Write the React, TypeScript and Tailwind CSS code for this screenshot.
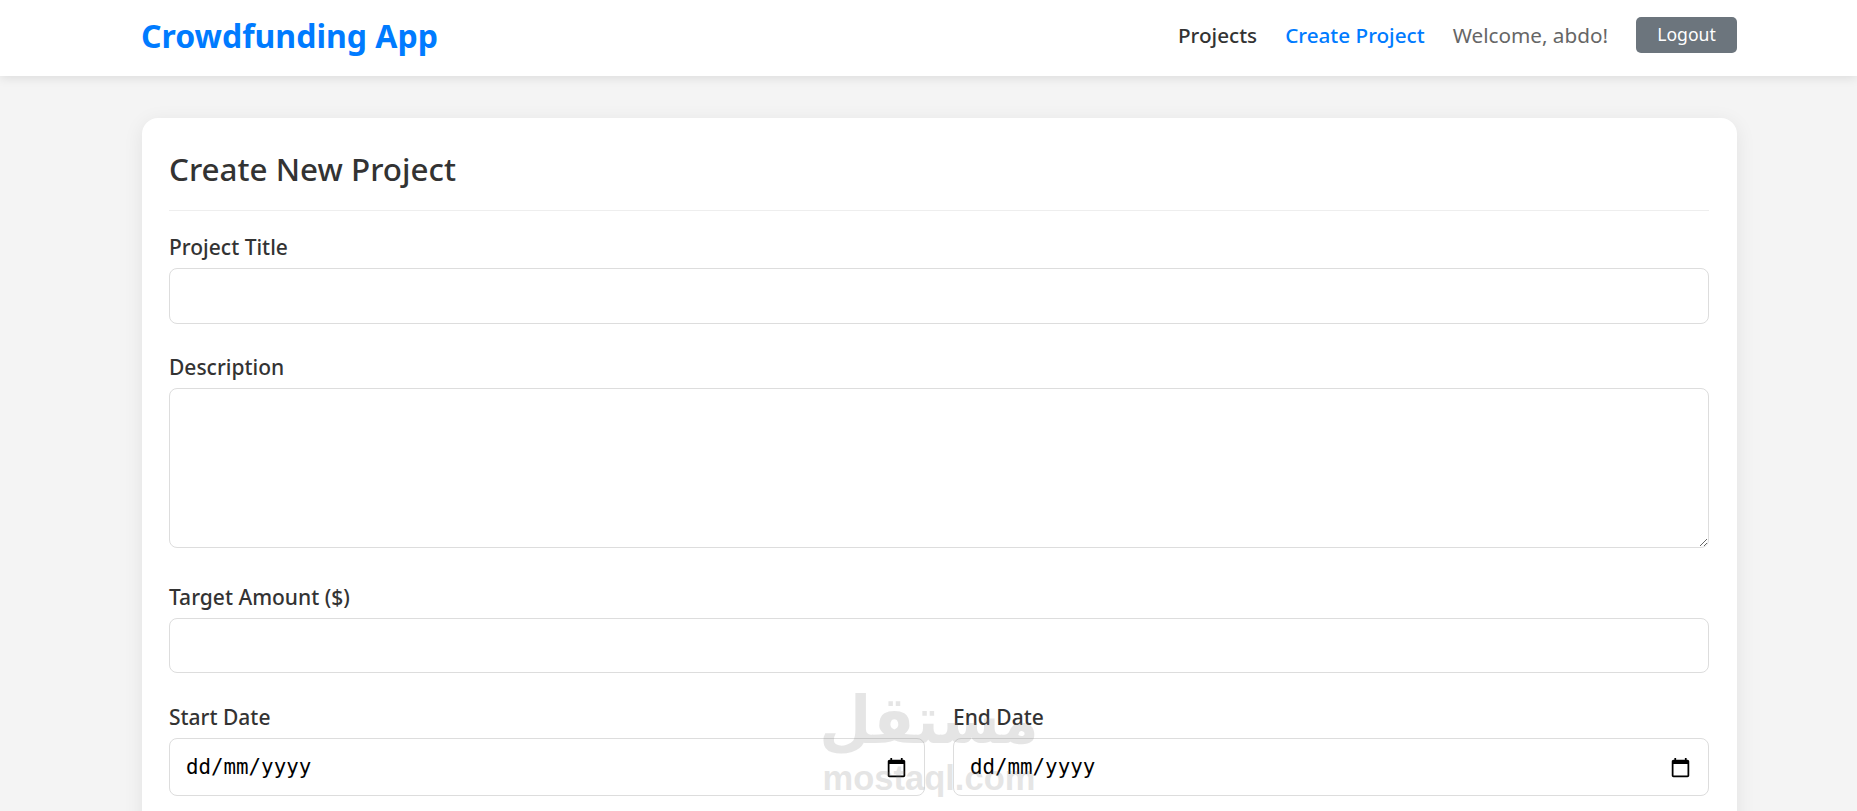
const fieldClass =
  "block w-full rounded-[8px] border border-[#dddddd] bg-white px-4 outline-none";

function Label({ children }: { children: string }) {
  return (
    <label className="block text-[21px] font-medium leading-[41px] text-[#333333]">
      {children}
    </label>
  );
}

function CalendarIcon() {
  return (
    <svg viewBox="0 0 24 24" className="h-[21px] w-[21px]" fill="#000000">
      <path d="M20 3h-1V1h-2v2H7V1H5v2H4c-1.1 0-2 .9-2 2v16c0 1.1.9 2 2 2h16c1.1 0 2-.9 2-2V5c0-1.1-.9-2-2-2zm0 18H4V8h16v13z" />
    </svg>
  );
}

function DateField({ label }: { label: string }) {
  return (
    <div className="min-w-0 flex-1">
      <Label>{label}</Label>
      <div className="flex h-[58px] items-center justify-between rounded-[8px] border border-[#dddddd] bg-white pl-4 pr-[17px] font-['DejaVu_Sans_Mono',monospace] text-[20.8px] text-black">
        <span className="pt-[2px]">dd/mm/yyyy</span>
        <CalendarIcon />
      </div>
    </div>
  );
}

export default function App() {
  return (
    <div className="relative h-[811px] overflow-hidden bg-[#f4f4f4] font-['Noto_Sans',sans-serif]">
      <header className="relative z-10 flex h-[76px] items-center justify-between bg-white pb-[4px] pl-[141px] pr-[120px] shadow-[0_2px_10px_rgba(0,0,0,0.1)]">
        <a href="#" className="text-[32px] font-bold leading-none text-[#007bff]">
          Crowdfunding App
        </a>
        <nav className="mb-[2px] flex items-center gap-[28px] text-[20.7px]">
          <a href="#" className="pt-[2px] font-medium text-[#333333]">Projects</a>
          <a href="#" className="pt-[2px] font-medium text-[#007bff]">Create Project</a>
          <span className="pt-[2px] text-[#666666]">Welcome, abdo!</span>
          <button
            type="button"
            className="h-[36px] w-[101px] rounded-[5px] bg-[#6c757d] pb-[1px] text-[17.6px] leading-none text-white"
          >
            Logout
          </button>
        </nav>
      </header>

      <main className="ml-[142px] mt-[42px] h-[900px] w-[1595px] rounded-[16px] bg-white pl-[27px] pr-[28px] pt-[27px] shadow-[0_4px_20px_rgba(0,0,0,0.08)]">
        <h1 className="border-b border-[#eeeeee] pb-[18px] text-[31.4px] font-medium leading-[47px] text-[#333333]">
          Create New Project
        </h1>

        <form className="pt-[16px]">
          <div className="mb-[23px]">
            <Label>Project Title</Label>
            <input type="text" className={`${fieldClass} h-[56px]`} />
          </div>

          <div className="mb-[29px]">
            <Label>Description</Label>
            <textarea className={`${fieldClass} h-[160px] py-3`} />
          </div>

          <div className="mb-[24px]">
            <Label>Target Amount ($)</Label>
            <input type="text" className={`${fieldClass} h-[55px]`} />
          </div>

          <div className="flex gap-[28px]">
            <DateField label="Start Date" />
            <DateField label="End Date" />
          </div>
        </form>
      </main>

      <div className="pointer-events-none absolute left-[822px] top-[688px] z-20 flex w-[214px] flex-col items-center text-[#808080] opacity-20">
        <span dir="rtl" className="origin-bottom scale-y-110 font-['DejaVu_Sans',sans-serif] text-[60px] font-bold leading-[72px]">
          مستقل
        </span>
        <span className="font-['Liberation_Sans',sans-serif] text-[34.5px] font-bold leading-[36px]">
          mostaql.com
        </span>
      </div>
    </div>
  );
}
